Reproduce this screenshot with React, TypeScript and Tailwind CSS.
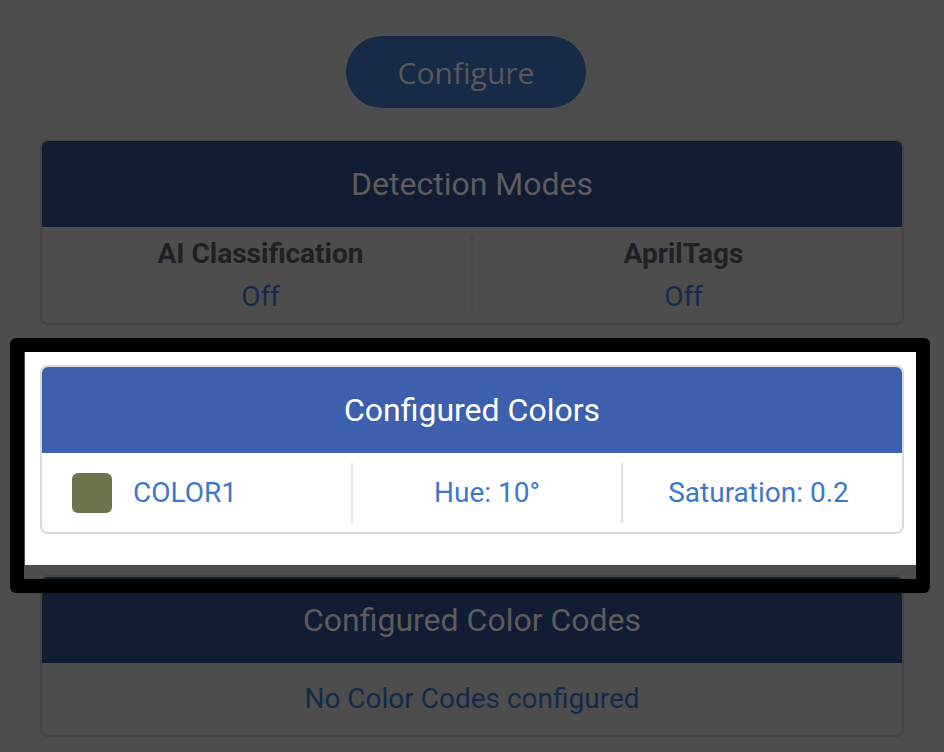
import React from 'react';

/**
 * 検出設定の概要画面（ツアーでハイライト中の状態）
 * 背景は暗く落とし、Configured Colors カードだけを明るく表示する
 */

interface ColorEntry {
  name: string;
  swatch: string;
  hue: number;
  saturation: number;
}

const colors: ColorEntry[] = [{ name: 'COLOR1', swatch: '#6e7449', hue: 10, saturation: 0.2 }];

const font = "font-['Roboto','Liberation_Sans',sans-serif]";

// 暗くなっているカードの見出し部分
function DimHeader({ title }: { title: string }) {
  return (
    <div className="flex h-[86px] items-center justify-center bg-[#121c33] text-[32px] text-[#5d5d5d]">
      {title}
    </div>
  );
}

function DetectionModes() {
  return (
    <div className="mt-[31px] overflow-hidden rounded-lg border-2 border-[#444444]">
      <DimHeader title="Detection Modes" />
      <div className="flex h-[96px] items-center">
        <div className="flex flex-1 flex-col items-center pl-2 text-[28px] leading-[43px]">
          <span className="font-bold text-[#1f2125]">AI Classification</span>
          <span className="text-[#142a4b]">Off</span>
        </div>
        <div className="h-[76px] w-[2px] bg-[#464646]" />
        <div className="flex flex-1 flex-col items-center pr-2 text-[28px] leading-[43px]">
          <span className="font-bold text-[#1f2125]">AprilTags</span>
          <span className="text-[#142a4b]">Off</span>
        </div>
      </div>
    </div>
  );
}

function ConfiguredColors() {
  return (
    <div className="rounded-lg border-2 border-[#d9d9d9] bg-white overflow-hidden">
      <div className="flex h-[86px] items-center justify-center bg-[#3c5fae] text-[32px] text-white">
        Configured Colors
      </div>
      {colors.map((c) => (
        <div key={c.name} className="flex h-[79px] items-center text-[28px] text-[#3b78c9]">
          <div className="flex w-[309px] items-center gap-[21px] pl-[30px]">
            <div className="h-10 w-10 rounded-md" style={{ backgroundColor: c.swatch }} />
            <span>{c.name}</span>
          </div>
          <div className="h-[60px] w-[2px] bg-[#e3e3e8]" />
          <div className="w-[268px] text-center">Hue: {c.hue}°</div>
          <div className="h-[60px] w-[2px] bg-[#e3e3e8]" />
          <div className="flex-1 pr-2 text-center">Saturation: {c.saturation}</div>
        </div>
      ))}
    </div>
  );
}

function ColorCodes() {
  return (
    <div className="mt-[10px] overflow-hidden rounded-lg border-2 border-[#444444]">
      <DimHeader title="Configured Color Codes" />
      <div className="flex h-[72px] items-center justify-center text-[28px] text-[#142a4b]">
        No Color Codes configured
      </div>
    </div>
  );
}

export default function App() {
  return (
    <div className={`min-h-screen bg-[#4d4d4d] ${font}`}>
      <div className="px-10 pt-9 pb-4">
        {/* 設定ボタン */}
        <div className="flex justify-center">
          <button
            type="button"
            className="mr-3 h-[72px] w-[240px] rounded-full bg-[#172a48] font-['Open_Sans',sans-serif] text-[30px] text-[#585858]"
          >
            Configure
          </button>
        </div>

        <DetectionModes />

        {/* ハイライト部分 */}
        <div className="relative z-10 mt-[27px] ml-[-15px] mr-[-12px] bg-white pl-[15px] pr-[12px] pt-[13px] pb-[31px]">
          <ConfiguredColors />
          <div className="pointer-events-none absolute -top-[14px] -left-[15px] -right-[14px] -bottom-[28px] rounded-[6px] border-[14px] border-black" />
        </div>

        <ColorCodes />
      </div>
    </div>
  );
}
